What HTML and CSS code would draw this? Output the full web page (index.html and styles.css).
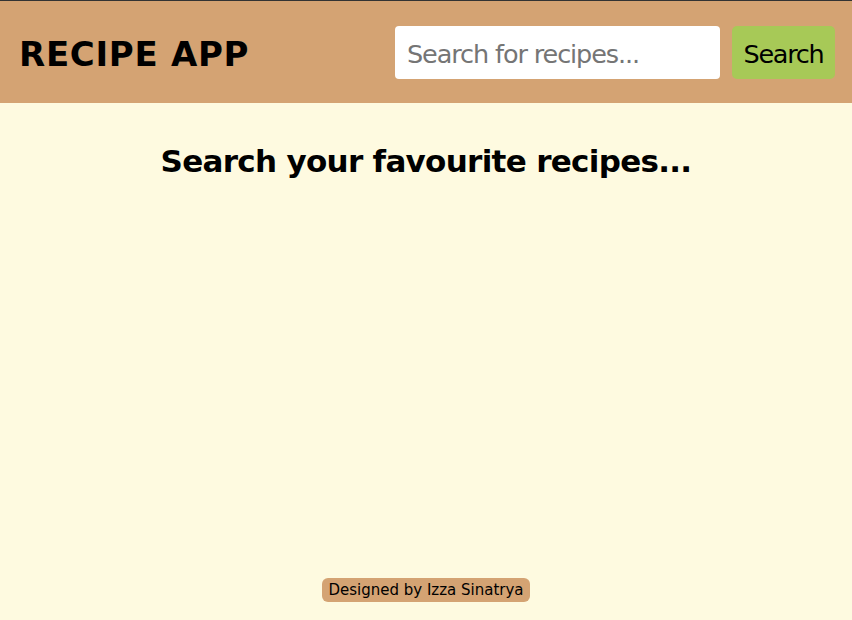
FILE: index.html
```html
<!DOCTYPE html>
<html lang="en">
<head>
<meta charset="utf-8">
<title>Recipe App</title>
<link rel="stylesheet" href="styles.css">
</head>
<body>
<header class="header">
  <h1 class="logo">RECIPE APP</h1>
  <form class="search-form">
    <input class="search-input" type="text" placeholder="Search for recipes...">
    <button class="search-btn" type="button">Search</button>
  </form>
</header>
<main class="main">
  <h2 class="intro">Search your favourite recipes...</h2>
</main>
<footer class="footer">
  <span class="credit">Designed by Izza Sinatrya</span>
</footer>
</body>
</html>
```

FILE: styles.css
```css
* { box-sizing: border-box; }
html, body { height: 100%; }
body {
  margin: 0;
  font-family: "DejaVu Sans", Verdana, sans-serif;
  background: #fefae0;
  border-top: 1px solid #333;
  display: flex;
  flex-direction: column;
}
.header {
  background: #d4a373;
  height: 102px;
  display: flex;
  align-items: center;
  justify-content: space-between;
  padding: 0 17px 0 19px;
}
.logo {
  margin: 4px 0 0;
  font-size: 34px;
  letter-spacing: 0.7px;
  font-weight: bold;
  color: #000;
}
.search-form {
  display: flex;
  gap: 12px;
}
.search-input {
  width: 325px;
  height: 53px;
  border: none;
  border-radius: 4px;
  padding: 3px 12px 0;
  font-family: inherit;
  font-size: 25.5px;
  letter-spacing: -1.1px;
  outline: none;
}
.search-input::placeholder { color: #757575; }
.search-btn {
  height: 53px;
  width: 103px;
  border: none;
  border-radius: 5px;
  background: #a7c957;
  font-family: inherit;
  font-size: 25.5px;
  letter-spacing: -1.3px;
  color: #000;
  padding: 3px 0 0;
}
.main {
  flex: 1;
  text-align: center;
}
.intro {
  margin: 40px 0 0;
  font-size: 31px;
  letter-spacing: -0.7px;
  font-weight: bold;
}
.footer {
  display: flex;
  justify-content: center;
  padding-bottom: 18px;
}
.credit {
  background: #d4a373;
  border-radius: 6px;
  padding: 3px 6px;
  font-size: 15px;
  line-height: 18px;
}
```
